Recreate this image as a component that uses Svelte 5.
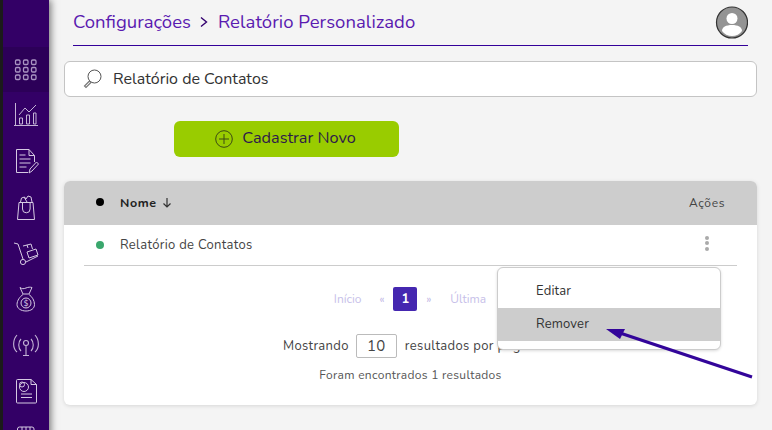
<script>
  const grid = [0,1,2].flatMap((r) => [0,1,2].map((c) => ({ x: 15 + c * 8, y: 58.5 + r * 7.5 })));
</script>

<div class="page">
  <aside class="side">
    <div class="nav active">
      <svg width="46" height="46" viewBox="0 46 46 46" fill="none" stroke="#a994c2" stroke-width="1.3">
        <g transform="translate(-3 0)">
        {#each grid as g}
          <rect x={g.x + 0.5} y={g.y + 0.5} width="4.5" height="4.5" rx="1.2" />
        {/each}
        </g>
      </svg>
    </div>
    <div class="nav">
      <svg width="46" height="46" viewBox="0 0 46 46" fill="none" stroke="#c4b4d6" stroke-width="1">
        <path d="M12.500 11v23M11 33.500h24" />
        <path d="M16.500 32v-6h3v6zM23.500 32v-9h3v9zM30.500 32V21h2.500v11z" />
        <path d="M16 23l6-7 4 4 7-7" />
      </svg>
    </div>
    <div class="nav">
      <svg width="46" height="46" viewBox="0 0 46 46" fill="none" stroke="#d5c9e2" stroke-width="1">
        <path d="M25 34.500H13.500V11.500H26l5.500 6V24M26 11.500v6h5.500" />
        <path d="M16.500 17h6M16.500 21h11M16.500 25h11M16.500 29h7" />
        <path d="M26 35l1-4 6.500-7 2 2-6.500 7z" />
      </svg>
    </div>
    <div class="nav">
      <svg width="46" height="46" viewBox="0 0 46 46" fill="none" stroke="#d5c9e2" stroke-width="1">
        <path d="M16 18.500h14l1.500 17h-17z" />
        <path d="M19.500 19v6a3.800 3.800 0 0 0 7.600 0v-6" />
        <path d="M17.500 18l1-4 3-1 1.500 2 2-3 3 1 1 5M21 13l3 5" />
      </svg>
    </div>
    <div class="nav">
      <svg width="46" height="46" viewBox="0 0 46 46" fill="none" stroke="#d5c9e2" stroke-width="1">
        <path d="M11 13l4 1 5 15" />
        <circle cx="20" cy="32" r="2.600" />
        <path d="M23 32l12-6M24 22l9-3 2 6-9 3zM20 16l8-2 1.500 5" />
        <path d="M24 15l1 3" />
      </svg>
    </div>
    <div class="nav">
      <svg width="46" height="46" viewBox="0 0 46 46" fill="none" stroke="#d5c9e2" stroke-width="1">
        <path d="M17 11.500c2 1.500 3.500 1.500 6 .5s4-1 6-.5l-3 6.500h-6z" />
        <path d="M20 18.500c-3 2-6 6-6 10 0 4 4 6.500 9 6.500s8.500-2.500 8.500-6.500c0-4-2.500-8-5.500-10" />
        <circle cx="23" cy="27" r="5" />
        <text x="23" y="30" class="dollar">$</text>
      </svg>
    </div>
    <div class="nav">
      <svg width="46" height="46" viewBox="0 0 46 46" fill="none" stroke="#c4b4d6" stroke-width="1.100">
        <circle cx="23" cy="21" r="2.500" />
        <path d="M23 23.500V33.500M20 33.500h6" />
        <path d="M18 17c-3 3-3 9 0 12M28 17c3 3 3 9 0 12" />
        <path d="M14 13c-4.500 5-4.500 13 0 17M32 13c4.500 5 4.500 13 0 17" />
      </svg>
    </div>
    <div class="nav">
      <svg width="46" height="46" viewBox="0 0 46 46" fill="none" stroke="#d5c9e2" stroke-width="1">
        <path d="M14.500 11.500H28l5.500 5V34a1 1 0 0 1-1 1h-18a1 1 0 0 1-1-1V12.500a1 1 0 0 1 1-1zM28 11.500v5h5.500" />
        <circle cx="21" cy="19" r="4.500" />
        <circle cx="19" cy="16.500" r="2.500" />
        <path d="M18 26h11M18 29.500h11" />
      </svg>
    </div>
    <div class="nav">
      <svg width="46" height="46" viewBox="0 0 46 46" fill="none" stroke="#d5c9e2" stroke-width="1">
        <path d="M14.500 18v-3a2 2 0 0 1 2-2h12.500a2 2 0 0 1 2 2v3M19 13v5M23 13v5M27 13v5" />
      </svg>
    </div>
  </aside>

  <main class="main">
    <header class="top">
      <div class="crumbs">
        <span>Configurações</span>
        <svg class="chev" width="10" height="12" viewBox="0 0 10 12" fill="none" stroke="#33006f" stroke-width="1.400"><path d="M2 1.500 7.500 6 2 10.500" /></svg>
        <span class="wide">Relatório Personalizado</span>
      </div>
      <svg class="avatar" width="33" height="33" viewBox="0 0 33 33">
        <circle cx="17" cy="16.500" r="15.500" fill="#939393" stroke="#333" stroke-width="1.200" />
        <circle cx="17" cy="12.500" r="5.500" fill="#fff" />
        <path d="M7 25c0-4 4-6 10-6s10 2 10 6c-2 3-6 5-10 5s-8-2-10-5z" fill="#fff" />
      </svg>
    </header>

    <div class="search">
      <svg width="22" height="22" viewBox="0 0 22 22" fill="none">
        <circle cx="12.500" cy="8.500" r="6.500" stroke="#555" stroke-width="1" />
        <path d="M7.500 13 2.500 18l1.500 1.500 5-5z" stroke="#777" stroke-width="1.200" />
      </svg>
      <span>Relatório de Contatos</span>
    </div>

    <div class="actions">
      <button class="add">
        <svg width="18" height="18" viewBox="0 0 18 18" fill="none" stroke="#3c4a14" stroke-width="1"><circle cx="9" cy="9" r="8.300" /><path d="M9 4v10M4 9h10" /></svg>
        <span>Cadastrar Novo</span>
      </button>
    </div>

    <section class="card">
      <div class="thead">
        <i class="dot black"></i>
        <b>Nome</b>
        <svg class="down" width="10" height="11" viewBox="0 0 10 11" fill="none" stroke="#333" stroke-width="1.200"><path d="M5 1v9M1.500 6.500 5 10l3.500-3.500" /></svg>
        <span class="acoes">Ações</span>
      </div>
      <div class="row">
        <i class="dot green"></i>
        <span>Relatório de Contatos</span>
        <div class="kebab"><i></i><i></i><i></i></div>
      </div>
      <nav class="pager">
        <span class="end">Início</span>
        <span class="mini">«</span>
        <span class="cur">1</span>
        <span class="mini">»</span>
        <span class="end">Última</span>
      </nav>
      <div class="perpage">
        <span class="lead">Mostrando</span>
        <span class="count">10</span>
        <span>resultados por página</span>
      </div>
      <p class="found">Foram encontrados 1 resultados</p>

      <div class="menu">
        <div class="item">Editar</div>
        <div class="item hover">Remover</div>
      </div>
    </section>
  </main>

  <svg class="arrow" width="772" height="430" viewBox="0 0 772 430">
    <path d="M752 377 620 333" stroke="#33059a" stroke-width="3" fill="none" />
    <path d="M606 329 625 329 620 339z" fill="#33059a" />
  </svg>
</div>

<style>
  :global(body) { margin: 0; overflow: hidden; }
  .page {
    position: relative;
    display: flex;
    width: 772px;
    height: 430px;
    overflow: hidden;
    background: #f4f4f4;
    font-family: "Nunito", "Lato", "Noto Sans", sans-serif;
    color: #333;
  }
  .side {
    flex: none;
    width: 46px;
    height: 430px;
    overflow: hidden;
    border-left: 3px solid #1b1b1b;
    background: #330066;
    box-shadow: 2px 0 7px rgba(0, 0, 0, .5);
    padding-top: 47px;
    z-index: 2;
  }
  .nav { height: 46px; display: flex; }
  .nav.active { background: #2c0058; height: 45px; }
  .main {
    flex: 1;
    min-width: 0;
    padding: 0 15px;
  }
  .top {
    margin: 0 9px;
    height: 46px;
    box-sizing: border-box;
    border-bottom: 1px solid #330099;
    display: flex;
    align-items: center;
    justify-content: space-between;
  }
  .crumbs {
    display: flex;
    align-items: center;
    gap: 8px;
    font-size: 18.500px;
    color: #5a1ab0;
    padding-bottom: 1px;
  }
  .wide { margin-left: 1px; letter-spacing: .05px; }
  .search {
    margin-top: 15px;
    height: 36px;
    box-sizing: border-box;
    display: flex;
    align-items: center;
    gap: 9px;
    padding-left: 17px;
    background: #fff;
    border: 1px solid #c4c4c4;
    border-radius: 6px;
    font-size: 16px;
    color: #333;
  }
  .actions { margin-top: 24px; padding-left: 110px; }
  .add {
    width: 225px;
    height: 36px;
    display: flex;
    align-items: center;
    justify-content: center;
    gap: 9px;
    padding: 0 2px 2px 0;
    border: 0;
    border-radius: 6px;
    background: #99cc00;
    color: #2e1a4a;
    font: inherit;
    font-size: 16.300px;
  }
  .add svg { margin-top: 2px; }
  .card {
    position: relative;
    margin-top: 24px;
    height: 224px;
    background: #fff;
    border-radius: 6px;
    box-shadow: 0 1px 4px rgba(0, 0, 0, .12);
    text-align: center;
  }
  .thead {
    height: 44px;
    box-sizing: border-box;
    display: flex;
    align-items: center;
    padding: 0 32px 2px 32px;
    background: #cdcdcd;
    border-radius: 6px 6px 0 0;
    font-size: 12.500px;
    letter-spacing: .6px;
    color: #222;
  }
  .dot { width: 8px; height: 8px; border-radius: 50%; flex: none; margin-right: 16px; }
  .black { background: #000; }
  .green { background: #3aa76d; }
  .down { margin-left: 5px; }
  .acoes { margin-left: auto; margin-top: 2px; font-size: 12px; color: #444; }
  .row {
    position: relative;
    margin: 0 20px;
    height: 41px;
    box-sizing: border-box;
    display: flex;
    align-items: center;
    padding: 0 0 0 12px;
    border-bottom: 1px solid #ccc;
    font-size: 13px;
    letter-spacing: .3px;
    color: #444;
  }
  .kebab {
    margin-left: auto;
    margin-right: 28px;
    margin-bottom: 2px;
    display: flex;
    flex-direction: column;
    gap: 1.500px;
    padding-bottom: 2px;
  }
  .kebab i { width: 4px; height: 4px; border-radius: 50%; background: #aaa; }
  .pager {
    margin-top: 21px;
    height: 24px;
    display: flex;
    align-items: center;
    justify-content: center;
    gap: 9px;
    font-size: 12px;
    color: #c7bfe9;
  }
  .end:first-child { margin-right: 9px; margin-left: -1px; }
  .end:last-child { margin-left: 10px; }
  .mini { font-size: 11px; color: #bdb3e3; }
  .cur {
    width: 24px;
    height: 24px;
    line-height: 24px;
    border-radius: 2px;
    background: #4527b0;
    color: #fff;
    font-weight: 700;
    font-size: 13px;
  }
  .perpage {
    margin-top: 23px;
    display: flex;
    align-items: center;
    justify-content: center;
    gap: 8px;
    font-size: 13px;
    letter-spacing: .35px;
    color: #444;
  }
  .lead { margin-left: 1px; margin-right: -1px; }
  .count {
    width: 41px;
    height: 24px;
    box-sizing: border-box;
    line-height: 22px;
    border: 1px solid #bbb;
    border-radius: 2px;
    font-size: 15px;
  }
  .found {
    margin: 9px 0 0;
    font-size: 12px;
    letter-spacing: .3px;
    color: #555;
  }
  .menu {
    position: absolute;
    left: 433px;
    top: 86px;
    width: 224px;
    height: 83px;
    box-sizing: border-box;
    padding-top: 7px;
    background: #fff;
    border: 1px solid #ccc;
    border-radius: 6px;
    box-shadow: 0 1px 3px rgba(0, 0, 0, .15);
    text-align: left;
    font-size: 13px;
    letter-spacing: .15px;
    color: #333;
  }
  .item {
    height: 33px;
    line-height: 33px;
    padding-left: 38px;
  }
  .hover { background: #cdcdcd; }
  .arrow { position: absolute; inset: 0; pointer-events: none; z-index: 3; }
  .dollar { font: 8px "DejaVu Sans", sans-serif; fill: #d5c9e2; stroke: none; text-anchor: middle; }
</style>
